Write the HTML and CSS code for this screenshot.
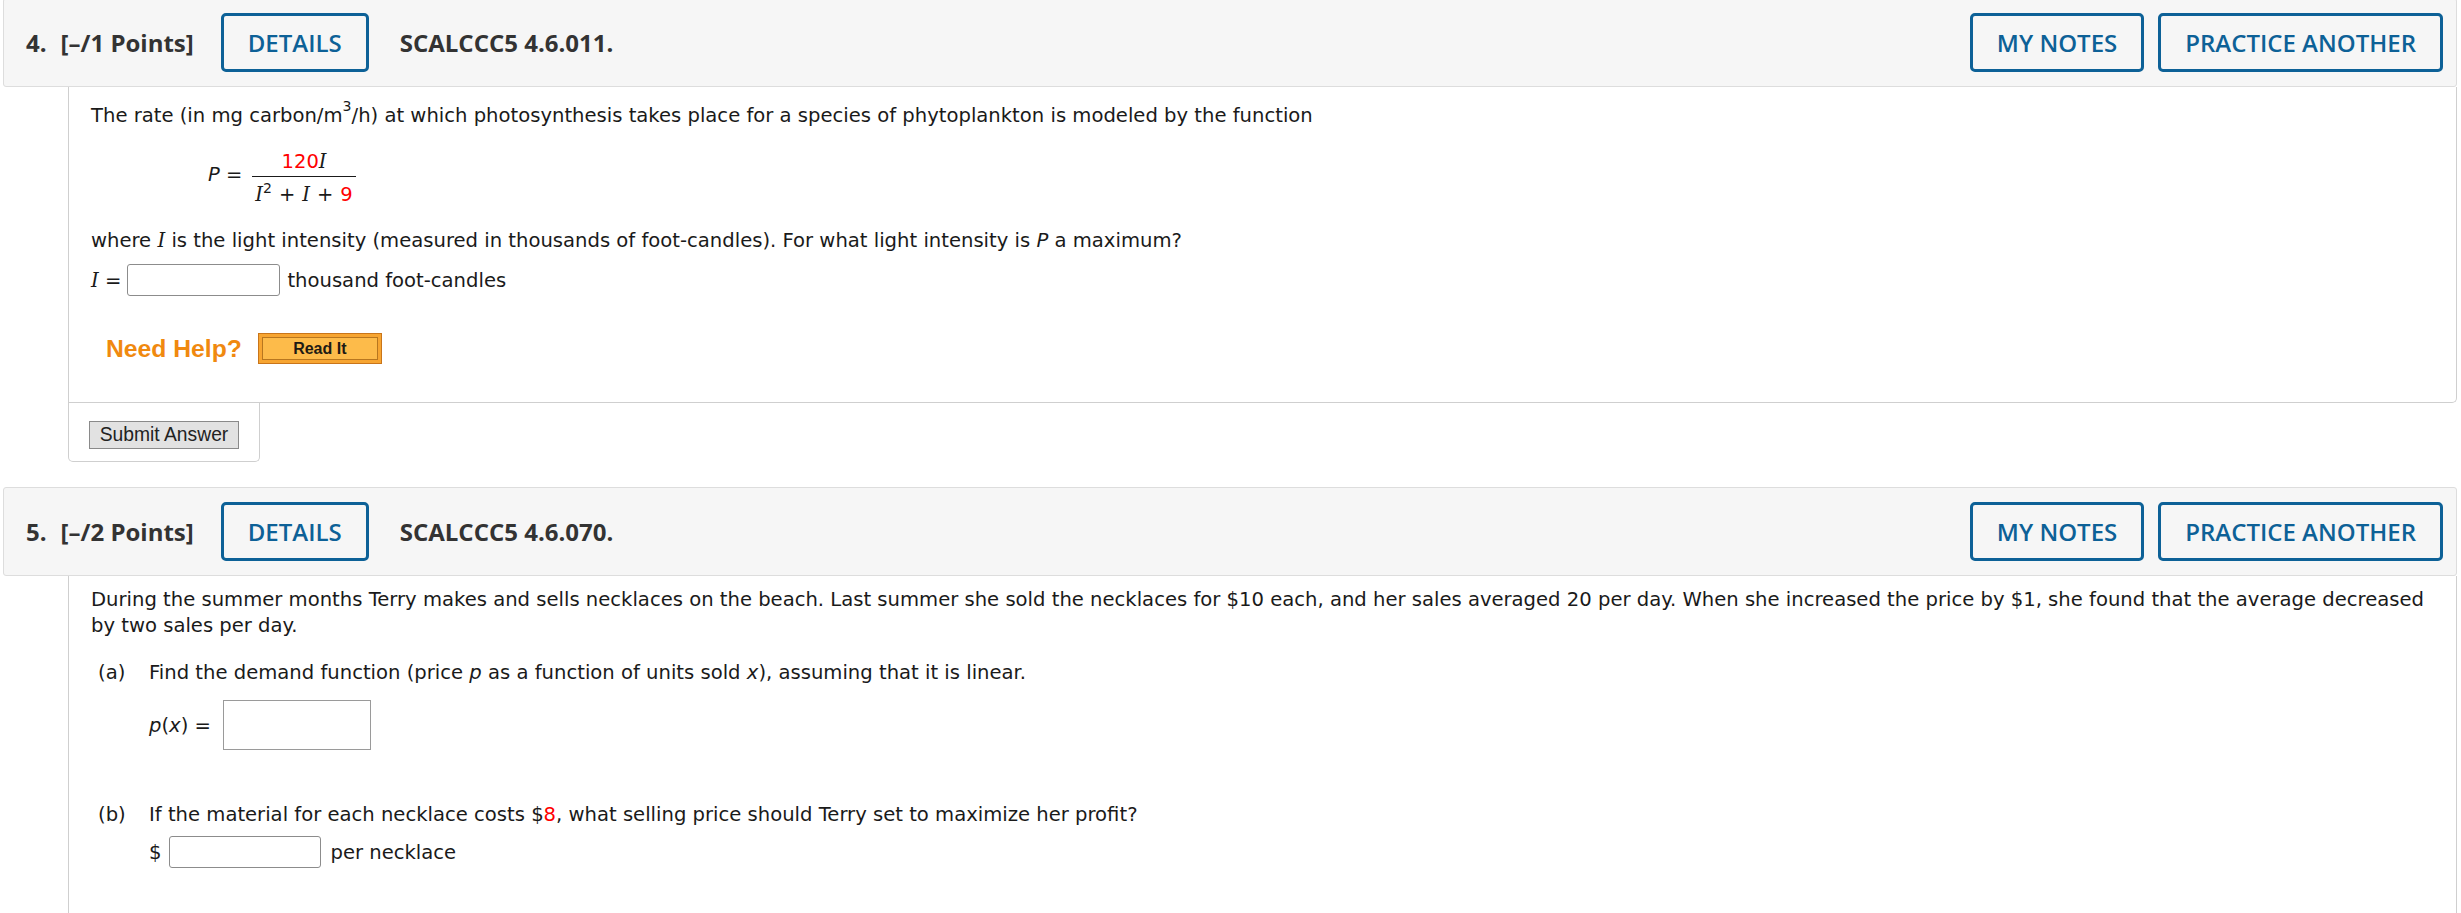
FILE: index.html
```html
<!DOCTYPE html>
<html>
<head>
<meta charset="utf-8">
<link rel="stylesheet" href="styles.css">
</head>
<body>
<div class="page">
  <section class="question">
    <div class="qheader">
      <span class="qnum"><span class="qn">4.</span>[–/1 Points]</span>
      <span class="btn details">DETAILS</span>
      <span class="qref">SCALCCC5 4.6.011.</span>
      <span class="btn notes">MY NOTES</span>
      <span class="btn practice">PRACTICE ANOTHER</span>
    </div>
    <div class="qbody q4">
      <p class="txt first">The rate (in mg carbon/m<sup>3</sup>/h) at which photosynthesis takes place for a species of phytoplankton is modeled by the function</p>
      <div class="formula">
        <span class="lhs"><i>P</i> =</span>
        <span class="frac">
          <span class="num"><span class="red">120</span><i class="v">I</i></span>
          <span class="den"><i class="v">I</i><sup>2</sup><span class="op">+</span><i class="v">I</i><span class="op">+</span><span class="red">9</span></span>
        </span>
      </div>
      <p class="txt where">where <i class="v">I</i> is the light intensity (measured in thousands of foot-candles). For what light intensity is <i>P</i> a maximum?</p>
      <div class="answer-row">
        <span class="lbl"><i class="v">I</i> =</span>
        <span class="field"></span>
        <span class="unit">thousand foot-candles</span>
      </div>
      <div class="help">
        <span class="needhelp">Need Help?</span>
        <span class="readit"><span class="readit-inner">Read It</span></span>
      </div>
    </div>
    <div class="submitbar">
      <span class="submit">Submit Answer</span>
    </div>
  </section>

  <section class="question">
    <div class="qheader">
      <span class="qnum"><span class="qn">5.</span>[–/2 Points]</span>
      <span class="btn details">DETAILS</span>
      <span class="qref">SCALCCC5 4.6.070.</span>
      <span class="btn notes">MY NOTES</span>
      <span class="btn practice">PRACTICE ANOTHER</span>
    </div>
    <div class="qbody q5">
      <p class="txt">During the summer months Terry makes and sells necklaces on the beach. Last summer she sold the necklaces for $10 each, and her sales averaged 20 per day. When she increased the price by $1, she found that the average decreased by two sales per day.</p>
      <div class="part part-a">
        <span class="plabel">(a)</span>
        <div class="pcontent">
          <p class="txt">Find the demand function (price <i>p</i> as a function of units sold <i>x</i>), assuming that it is linear.</p>
          <div class="answer-row big">
            <span class="lbl"><i>p</i>(<i>x</i>) =</span>
            <span class="field tall"></span>
          </div>
        </div>
      </div>
      <div class="part part-b">
        <span class="plabel">(b)</span>
        <div class="pcontent">
          <p class="txt">If the material for each necklace costs $<span class="red">8</span>, what selling price should Terry set to maximize her profit?</p>
          <div class="answer-row dollar">
            <span class="lbl">$</span>
            <span class="field"></span>
            <span class="unit">per necklace</span>
          </div>
        </div>
      </div>
    </div>
  </section>
</div>
</body>
</html>
```

FILE: styles.css
```css
html {
  overflow: hidden;
}

body {
  margin: 0;
  background: #ffffff;
  color: #1a1a1a;
  font-family: "DejaVu Sans", Verdana, sans-serif;
  font-size: 19.6px;
}

.page {
  margin-top: -2px;
  padding: 0 4px 0 3px;
}

.question {
  margin-bottom: 25px;
}

.qheader {
  display: flex;
  align-items: center;
  box-sizing: border-box;
  height: 89px;
  padding: 0 13px 0 22px;
  background: #f6f6f6;
  border: 1px solid #dddddd;
  border-radius: 3px;
  font-family: "Open Sans", "Noto Sans", sans-serif;
  font-size: 24px;
}

.qnum {
  font-weight: 700;
  color: #333333;
  margin-right: 27px;
}

.qn {
  margin-right: 14px;
}

.btn {
  display: flex;
  align-items: center;
  box-sizing: border-box;
  height: 59px;
  padding: 0 24px;
  border: 3px solid #0d6197;
  border-radius: 5px;
  color: #0d6197;
  font-weight: 600;
}

.qref {
  margin-left: 31px;
  font-weight: 700;
  color: #333333;
}

.notes {
  margin-left: auto;
}

.practice {
  margin-left: 14px;
}

.qbody {
  margin-left: 65px;
  border: 1px solid #cfcfcf;
  border-top: none;
  border-radius: 0 0 5px 0;
  padding: 11px 22px 38px 22px;
}

.qbody.q5 {
  border-bottom: none;
  padding-bottom: 200px;
}

.txt {
  margin: 0;
  line-height: 26px;
}

.txt.first {
  padding-top: 5px;
}

sup {
  font-size: 0.72em;
  line-height: 0;
  vertical-align: 0.6em;
}

.txt sup {
  vertical-align: 0.75em;
}

.red {
  color: #ff0000;
}

i.v {
  font-family: "DejaVu Serif", serif;
}

.formula {
  display: flex;
  align-items: center;
  margin: 22px 0 0 117px;
  font-size: 19.5px;
}

.lhs {
  margin: 0 10px 8px 0;
}

.frac {
  display: inline-flex;
  flex-direction: column;
  align-items: center;
}

.num {
  align-self: stretch;
  padding: 0 0 3px;
  border-bottom: 1.5px solid #1a1a1a;
  line-height: 22px;
  text-align: center;
}

.den {
  padding: 7px 3px 0;
  line-height: 22px;
}

.op {
  margin: 0 7px;
}

.where {
  margin-top: 22px;
}

.answer-row {
  display: flex;
  align-items: center;
  margin-top: 10px;
}

.answer-row .lbl {
  margin-right: 6px;
}

.field {
  display: inline-block;
  box-sizing: border-box;
  width: 153px;
  height: 32px;
  border: 1.5px solid #8c8c8c;
  border-radius: 3px;
  background: #ffffff;
}

.field.tall {
  width: 148px;
  height: 50px;
  border: 1px solid #9a9a9a;
  border-radius: 0;
}

.unit {
  margin-left: 7px;
}

.help {
  display: flex;
  align-items: center;
  margin: 37px 0 0 15px;
}

.needhelp {
  font-family: "Liberation Sans", Arial, sans-serif;
  font-weight: 700;
  font-size: 24.7px;
  color: #f0890f;
  margin-right: 16px;
}

.readit {
  display: inline-block;
  box-sizing: border-box;
  width: 124px;
  height: 31px;
  padding: 3px;
  background: #f7a531;
  border: 1px solid #c9751a;
}

.readit-inner {
  display: flex;
  align-items: center;
  justify-content: center;
  height: 100%;
  box-sizing: border-box;
  background: #fdbb4a;
  border: 1px solid #b8761e;
  font-family: "Liberation Sans", Arial, sans-serif;
  font-weight: 700;
  font-size: 16px;
  color: #1e1a14;
}

.submitbar {
  box-sizing: border-box;
  width: 192px;
  margin-left: 65px;
  padding: 18px 0 12px 20px;
  border: 1px solid #cfcfcf;
  border-top: none;
  border-radius: 0 0 5px 5px;
}

.submit {
  display: inline-block;
  box-sizing: border-box;
  width: 150px;
  height: 28px;
  line-height: 25px;
  text-align: center;
  background: #e2e2e2;
  border: 1.5px solid #8a8a8a;
  font-family: "Liberation Sans", Arial, sans-serif;
  font-size: 19.3px;
  color: #222222;
}

.part {
  display: flex;
  margin-left: 7px;
}

.part-a {
  margin-top: 21px;
}

.part-b {
  margin-top: 52px;
}

.plabel {
  width: 51px;
  line-height: 26px;
}

.pcontent {
  flex: 1;
}

.answer-row.big {
  margin-top: 14px;
}

.answer-row.big .lbl {
  margin-right: 12px;
}

.answer-row.dollar {
  margin-top: 8px;
}

.answer-row.dollar .lbl {
  margin-right: 8px;
}

.answer-row.dollar .field {
  width: 152px;
}

.answer-row.dollar .unit {
  margin-left: 9px;
}
```
